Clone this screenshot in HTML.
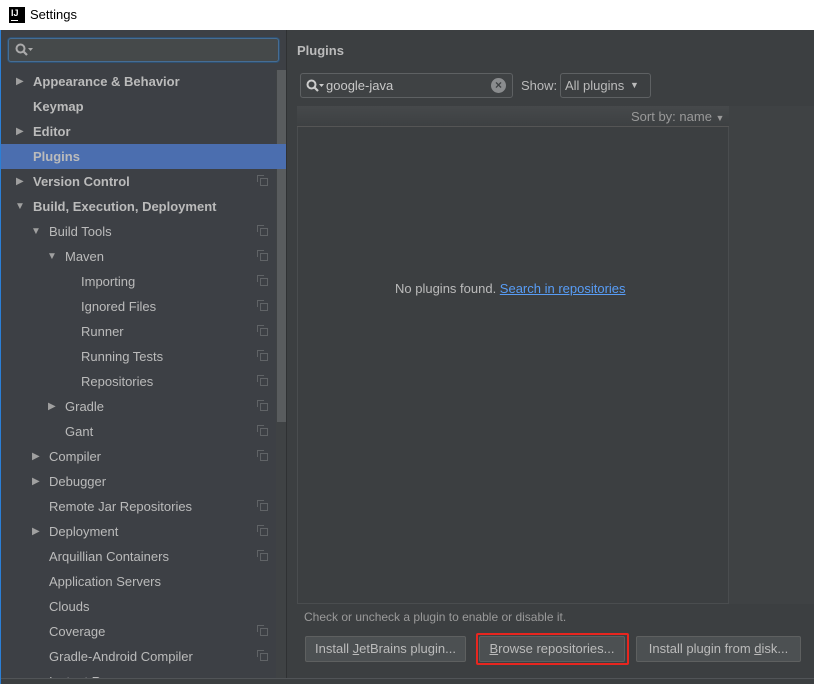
<!DOCTYPE html>
<html><head><style>
*{margin:0;padding:0;box-sizing:border-box}
body{width:814px;height:684px;overflow:hidden;background:#3c3f41;font-family:"Liberation Sans","DejaVu Sans",sans-serif;font-size:13px;color:#bbbbbb;position:relative}
.abs{position:absolute}
#title{left:0;top:0;width:814px;height:30px;background:#fff;color:#000;font-size:13px}
#left{left:1px;top:30px;width:285px;height:654px;background:#3d4045}
.row{position:absolute;left:0;width:276px;height:25px;line-height:25px;white-space:nowrap}
.b{font-weight:bold}
.tri{position:absolute;font-size:10px;color:#a0a0a0}
.cp{position:absolute;left:259px;top:9px;width:8px;height:8px;border:1px solid #606366}
.cp:after{content:"";position:absolute;left:-4px;top:-4px;width:6px;height:6px;border-left:1px solid #606366;border-top:1px solid #606366}
.btn{position:absolute;top:636px;height:26px;background:#4c5052;border:1px solid #5e6060;border-radius:2px;color:#bbb;text-align:center;line-height:24px}
</style></head><body>
<div class="abs" style="left:0;top:0;width:1px;height:684px;background:#2b7fd6"></div>
<div id="title" class="abs">
 <div class="abs" style="left:9px;top:7px;width:16px;height:16px;background:#000;color:#fff;font-size:9px;font-weight:bold;line-height:12px;padding-left:2px">IJ<div style="position:absolute;left:2px;bottom:2px;width:7px;height:1px;background:#fff"></div></div>
 <div class="abs" style="left:30px;top:7px">Settings</div>
</div>
<div id="left" class="abs">
 <div class="abs" style="left:7px;top:8px;width:271px;height:24px;background:#45494a;border:1px solid #466d94;border-radius:3px;box-shadow:0 0 0 1px #2f5070"></div>
 <svg class="abs" style="left:14px;top:13px" width="20" height="14"><circle cx="5.5" cy="5.5" r="4" fill="none" stroke="#aaa" stroke-width="2"/><path d="M8.5 8.5l3.5 3.5" stroke="#aaa" stroke-width="2.2"/><path d="M13 5h5l-2.5 3z" fill="#aaa"/></svg>
 <div class="abs" style="left:275px;top:40px;width:10px;height:614px;background:#3f4244"></div>
 <div class="abs" style="left:276px;top:40px;width:9px;height:352px;background:#595c5e"></div>
</div>
<div class="abs" style="left:286px;top:30px;width:1px;height:654px;background:#2f3133"></div>
<div class="abs" style="left:1px;top:30px;width:285px;height:654px;overflow:hidden">
 <div class="row b" style="top:39px"><span class="tri" style="left:15px">▶</span><span style="position:absolute;left:32px">Appearance &amp; Behavior</span></div>
 <div class="row b" style="top:64px"><span style="position:absolute;left:32px">Keymap</span></div>
 <div class="row b" style="top:89px"><span class="tri" style="left:15px">▶</span><span style="position:absolute;left:32px">Editor</span></div>
 <div class="row b" style="top:114px;width:285px;background:#4b6eaf"><span style="position:absolute;left:32px">Plugins</span></div>
 <div class="row b" style="top:139px"><span class="tri" style="left:15px">▶</span><span style="position:absolute;left:32px">Version Control</span><i class="cp"></i></div>
 <div class="row b" style="top:164px"><span class="tri" style="left:14px">▼</span><span style="position:absolute;left:32px">Build, Execution, Deployment</span></div>
 <div class="row" style="top:189px"><span class="tri" style="left:30px">▼</span><span style="position:absolute;left:48px">Build Tools</span><i class="cp"></i></div>
 <div class="row" style="top:214px"><span class="tri" style="left:46px">▼</span><span style="position:absolute;left:64px">Maven</span><i class="cp"></i></div>
 <div class="row" style="top:239px"><span style="position:absolute;left:80px">Importing</span><i class="cp"></i></div>
 <div class="row" style="top:264px"><span style="position:absolute;left:80px">Ignored Files</span><i class="cp"></i></div>
 <div class="row" style="top:289px"><span style="position:absolute;left:80px">Runner</span><i class="cp"></i></div>
 <div class="row" style="top:314px"><span style="position:absolute;left:80px">Running Tests</span><i class="cp"></i></div>
 <div class="row" style="top:339px"><span style="position:absolute;left:80px">Repositories</span><i class="cp"></i></div>
 <div class="row" style="top:364px"><span class="tri" style="left:47px">▶</span><span style="position:absolute;left:64px">Gradle</span><i class="cp"></i></div>
 <div class="row" style="top:389px"><span style="position:absolute;left:64px">Gant</span><i class="cp"></i></div>
 <div class="row" style="top:414px"><span class="tri" style="left:31px">▶</span><span style="position:absolute;left:48px">Compiler</span><i class="cp"></i></div>
 <div class="row" style="top:439px"><span class="tri" style="left:31px">▶</span><span style="position:absolute;left:48px">Debugger</span></div>
 <div class="row" style="top:464px"><span style="position:absolute;left:48px">Remote Jar Repositories</span><i class="cp"></i></div>
 <div class="row" style="top:489px"><span class="tri" style="left:31px">▶</span><span style="position:absolute;left:48px">Deployment</span><i class="cp"></i></div>
 <div class="row" style="top:514px"><span style="position:absolute;left:48px">Arquillian Containers</span><i class="cp"></i></div>
 <div class="row" style="top:539px"><span style="position:absolute;left:48px">Application Servers</span></div>
 <div class="row" style="top:564px"><span style="position:absolute;left:48px">Clouds</span></div>
 <div class="row" style="top:589px"><span style="position:absolute;left:48px">Coverage</span><i class="cp"></i></div>
 <div class="row" style="top:614px"><span style="position:absolute;left:48px">Gradle-Android Compiler</span><i class="cp"></i></div>
 <div class="row" style="top:639px"><span style="position:absolute;left:48px">Instant Run</span></div>
</div>
<div class="abs" style="left:1px;top:678px;width:813px;height:6px;background:#3c3f41;border-top:1px solid #515457"></div>
<!-- right -->
<div class="abs b" style="left:297px;top:43px;font-weight:bold">Plugins</div>
<div class="abs" style="left:300px;top:73px;width:213px;height:25px;border:1px solid #5e6163;border-radius:3px;background:#3f4244"></div>
<svg class="abs" style="left:306px;top:79px" width="20" height="14"><circle cx="5.5" cy="5.5" r="4" fill="none" stroke="#ccc" stroke-width="2"/><path d="M8.5 8.5l3.5 3.5" stroke="#ccc" stroke-width="2.2"/><path d="M13 5h5l-2.5 3z" fill="#ccc"/></svg>
<div class="abs" style="left:326px;top:78px;color:#c8c8c8">google-java</div>
<div class="abs" style="left:491px;top:78px;width:15px;height:15px;border-radius:50%;background:#8a8c8e;color:#3f4244;font-size:12px;line-height:15px;text-align:center;font-weight:bold">×</div>
<div class="abs" style="left:521px;top:78px">Show:</div>
<div class="abs" style="left:560px;top:73px;width:91px;height:25px;border:1px solid #5e6163;border-radius:3px;background:#3c3f41"></div>
<div class="abs" style="left:565px;top:78px">All plugins</div>
<div class="abs" style="left:630px;top:80px;font-size:9px">▼</div>
<div class="abs" style="left:297px;top:106px;width:432px;height:498px;background:#3c3f41;border:1px solid #4a4d4f"></div>
<div class="abs" style="left:297px;top:106px;width:432px;height:21px;background:linear-gradient(#46494b,#3d4042);border-bottom:1px solid #555"></div>
<div class="abs" style="left:631px;top:109px;color:#999">Sort by: name <span style="font-size:9px">▼</span></div>
<div class="abs" style="left:729px;top:106px;width:85px;height:498px;background:#3f4244"></div>
<div class="abs" style="left:395px;top:281px">No plugins found. <span style="color:#589df6;text-decoration:underline">Search in repositories</span></div>
<div class="abs" style="left:304px;top:610px;color:#9a9a9a;font-size:12px">Check or uncheck a plugin to enable or disable it.</div>
<div class="btn" style="left:305px;width:161px">Install <u>J</u>etBrains plugin...</div>
<div class="abs" style="left:476px;top:633px;width:153px;height:32px;border:2px solid #e8261f;border-radius:2px"></div>
<div class="btn" style="left:479px;width:146px"><u>B</u>rowse repositories...</div>
<div class="btn" style="left:636px;width:165px">Install plugin from <u>d</u>isk...</div>
</body></html>
